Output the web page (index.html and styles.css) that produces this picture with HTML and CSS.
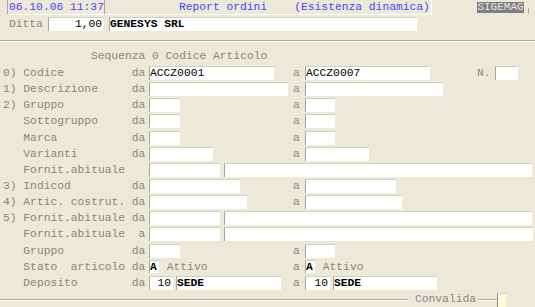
FILE: index.html
```html
<!DOCTYPE html>
<html>
<head>
<meta charset="utf-8">
<link rel="stylesheet" href="styles.css">
</head>
<body>
<div class="top">
  <div class="p1">06.10.06 11:37</div>
  <div class="p2">Report ordini    (Esistenza dinamica)</div>
  <div class="sig">SIGEMAG</div>
  <div class="tick"></div>
</div>
<div class="ditta">
  <span class="dlab">Ditta</span>
  <span class="f w56 r">1,00</span>
  <span class="f w308 b ml5">GENESYS SRL</span>
</div>
<div class="groove"></div>
<div class="seq">Sequenza 0 Codice Articolo</div>
<div class="rows">
  <div class="row">
    <span class="lab">0) Codice          da</span>
    <div class="lg"><span class="f w125">ACCZ0001</span></div>
    <span class="a">a</span>
    <span class="f w125">ACCZ0007</span>
    <span class="n">N.</span>
    <span class="f w23"></span>
  </div>
  <div class="row">
    <span class="lab">1) Descrizione     da</span>
    <div class="lg"><span class="f w139"></span></div>
    <span class="a">a</span>
    <span class="f w138"></span>
  </div>
  <div class="row">
    <span class="lab">2) Gruppo          da</span>
    <div class="lg"><span class="f w31"></span></div>
    <span class="a">a</span>
    <span class="f w30"></span>
  </div>
  <div class="row">
    <span class="lab">   Sottogruppo     da</span>
    <div class="lg"><span class="f w31"></span></div>
    <span class="a">a</span>
    <span class="f w30"></span>
  </div>
  <div class="row">
    <span class="lab">   Marca           da</span>
    <div class="lg"><span class="f w31"></span></div>
    <span class="a">a</span>
    <span class="f w30"></span>
  </div>
  <div class="row">
    <span class="lab">   Varianti        da</span>
    <div class="lg"><span class="f w64"></span></div>
    <span class="a">a</span>
    <span class="f w64"></span>
  </div>
  <div class="row">
    <span class="lab">   Fornit.abituale</span>
    <span class="f w71"></span>
    <span class="f w308 ml4"></span>
  </div>
  <div class="row">
    <span class="lab">3) Indicod         da</span>
    <div class="lg"><span class="f w91"></span></div>
    <span class="a">a</span>
    <span class="f w91"></span>
  </div>
  <div class="row">
    <span class="lab">4) Artic. costrut. da</span>
    <div class="lg"><span class="f w98"></span></div>
    <span class="a">a</span>
    <span class="f w97"></span>
  </div>
  <div class="row">
    <span class="lab">5) Fornit.abituale da</span>
    <span class="f w71"></span>
    <span class="f w308 ml4"></span>
  </div>
  <div class="row">
    <span class="lab">   Fornit.abituale  a</span>
    <span class="f w71"></span>
    <span class="f w309 ml4"></span>
  </div>
  <div class="row">
    <span class="lab">   Gruppo          da</span>
    <div class="lg"><span class="f w31"></span></div>
    <span class="a">a</span>
    <span class="f w30"></span>
  </div>
  <div class="row">
    <span class="lab">   Stato  articolo da</span>
    <div class="lg"><span class="f sm w10 b">A</span><span class="txt"> Attivo</span></div>
    <span class="a">a</span>
    <span class="f sm w10 b">A</span><span class="txt"> Attivo</span>
  </div>
  <div class="row">
    <span class="lab">   Deposito        da</span>
    <div class="lg"><span class="f w24 r">10</span><span class="f w105 b ml3">SEDE</span></div>
    <span class="a">a</span>
    <span class="f w25 r">10</span><span class="f w104 b ml3">SEDE</span>
  </div>
</div>
<div class="foot">
  <div class="gl g1"></div>
  <span class="conv">Convalida</span>
  <div class="gl g2"></div>
  <div class="cbox"></div>
</div>
</body>
</html>
```
FILE: styles.css
```css
html, body {
  margin: 0;
  padding: 0;
}
body {
  background: #ece9d8;
  font-family: "Liberation Mono", "Courier New", monospace;
  font-size: 11.3px;
  color: #868686;
  width: 535px;
  height: 307px;
  overflow: hidden;
}
.top {
  display: flex;
  height: 15px;
}
.p1 {
  margin-left: 7px;
  width: 95px;
  height: 14px;
  border-left: 1px solid #aca899;
  border-bottom: 1px solid #ffffff;
  color: #4646ff;
  padding-left: 1px;
  line-height: 14px;
  white-space: pre;
}
.p2 {
  width: 252px;
  height: 14px;
  border-left: 1px solid #aca899;
  border-right: 1px solid #ffffff;
  border-bottom: 1px solid #ffffff;
  color: #4646ff;
  padding-left: 74px;
  line-height: 14px;
  white-space: pre;
}
.sig {
  margin-left: 45px;
  margin-top: 2px;
  width: 47px;
  height: 11px;
  background: #7f7f7f;
  color: #e6e6e6;
  font-size: 11px;
  line-height: 11px;
  text-align: center;
  white-space: pre;
  overflow: hidden;
}
.tick {
  margin-left: 4px;
  margin-top: 8px;
  width: 1px;
  height: 6px;
  background: #aca899;
}
.ditta {
  display: flex;
  align-items: center;
  margin-top: 1px;
  height: 15px;
}
.dlab {
  width: 48px;
  box-sizing: border-box;
  padding-left: 9px;
  flex-shrink: 0;
}
.groove {
  margin-top: 9px;
  height: 0;
  border-top: 1px solid #aca899;
  border-bottom: 1px solid #ffffff;
}
.seq {
  height: 13px;
  padding: 8px 0 2px 91px;
  line-height: 13px;
  white-space: pre;
}
.rows {
  display: flex;
  flex-direction: column;
}
.row {
  display: flex;
  align-items: center;
  height: 16.15px;
}
.lab {
  width: 149px;
  box-sizing: border-box;
  padding-left: 3px;
  white-space: pre;
  flex-shrink: 0;
}
.lg {
  display: flex;
  align-items: center;
  width: 144px;
  flex-shrink: 0;
}
.a {
  width: 12px;
  flex-shrink: 0;
}
.n {
  margin-left: 47px;
  width: 18px;
  flex-shrink: 0;
}
.txt {
  margin-left: 1px;
  white-space: pre;
}
.f {
  display: block;
  flex-shrink: 0;
  box-sizing: border-box;
  height: 14px;
  background: #ffffff;
  border-left: 1px solid #a9a698;
  border-top: 1px solid #d3d0c1;
  color: #000000;
  line-height: 13px;
  white-space: pre;
  overflow: hidden;
}
.f.sm {
  height: 13px;
  line-height: 12px;
}
.r {
  text-align: right;
  padding-right: 2px;
}
.b {
  font-weight: bold;
}
.ml3 { margin-left: 3px; }
.ml4 { margin-left: 4px; }
.ml5 { margin-left: 5px; }
.w10 { width: 10px; }
.w23 { width: 23px; }
.w24 { width: 24px; }
.w25 { width: 25px; }
.w30 { width: 30px; }
.w31 { width: 31px; }
.w56 { width: 56px; }
.w64 { width: 64px; }
.w71 { width: 71px; }
.w91 { width: 91px; }
.w97 { width: 97px; }
.w98 { width: 98px; }
.w104 { width: 104px; }
.w105 { width: 105px; }
.w125 { width: 125px; }
.w138 { width: 138px; }
.w139 { width: 139px; }
.w308 { width: 308px; }
.w309 { width: 309px; }
.foot {
  display: flex;
  align-items: center;
  margin-top: 1px;
  height: 16px;
}
.gl {
  height: 0;
  border-top: 1px solid #aca899;
  border-bottom: 1px solid #ffffff;
  margin-top: 1px;
}
.g1 {
  width: 408px;
}
.conv {
  margin-left: 7px;
  width: 63px;
  white-space: pre;
  line-height: 13px;
}
.g2 {
  width: 19px;
}
.cbox {
  align-self: flex-end;
  width: 8px;
  height: 14px;
  background: #fffbd9;
  border-left: 1px solid #8c8a80;
  border-top: 1px solid #d8d5c6;
}
```
